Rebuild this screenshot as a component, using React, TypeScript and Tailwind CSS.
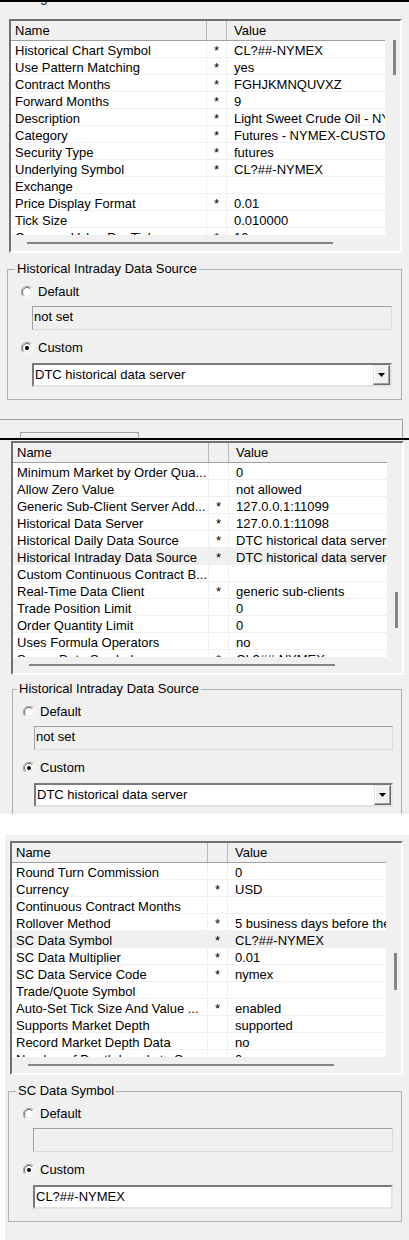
import React from "react"

type Row = { name: string; star?: boolean; value?: string }

const symbolRows: Row[] = [
  { name: "Historical Chart Symbol", star: true, value: "CL?##-NYMEX" },
  { name: "Use Pattern Matching", star: true, value: "yes" },
  { name: "Contract Months", star: true, value: "FGHJKMNQUVXZ" },
  { name: "Forward Months", star: true, value: "9" },
  { name: "Description", star: true, value: "Light Sweet Crude Oil - NYMEX" },
  { name: "Category", star: true, value: "Futures - NYMEX-CUSTOM" },
  { name: "Security Type", star: true, value: "futures" },
  { name: "Underlying Symbol", star: true, value: "CL?##-NYMEX" },
  { name: "Exchange" },
  { name: "Price Display Format", star: true, value: "0.01" },
  { name: "Tick Size", value: "0.010000" },
  { name: "Currency Value Per Tick", star: true, value: "10" },
]

const serverRows: Row[] = [
  { name: "Minimum Market by Order Qua...", value: "0" },
  { name: "Allow Zero Value", value: "not allowed" },
  { name: "Generic Sub-Client Server Add...", star: true, value: "127.0.0.1:11099" },
  { name: "Historical Data Server", star: true, value: "127.0.0.1:11098" },
  { name: "Historical Daily Data Source", star: true, value: "DTC historical data server" },
  { name: "Historical Intraday Data Source", star: true, value: "DTC historical data server" },
  { name: "Custom Continuous Contract B..." },
  { name: "Real-Time Data Client", star: true, value: "generic sub-clients" },
  { name: "Trade Position Limit", value: "0" },
  { name: "Order Quantity Limit", value: "0" },
  { name: "Uses Formula Operators", value: "no" },
  { name: "Server Data Symbol", star: true, value: "CL?##-NYMEX" },
]

const dataRows: Row[] = [
  { name: "Round Turn Commission", value: "0" },
  { name: "Currency", star: true, value: "USD" },
  { name: "Continuous Contract Months" },
  { name: "Rollover Method", star: true, value: "5 business days before the expiration" },
  { name: "SC Data Symbol", star: true, value: "CL?##-NYMEX" },
  { name: "SC Data Multiplier", star: true, value: "0.01" },
  { name: "SC Data Service Code", star: true, value: "nymex" },
  { name: "Trade/Quote Symbol" },
  { name: "Auto-Set Tick Size And Value ...", star: true, value: "enabled" },
  { name: "Supports Market Depth", value: "supported" },
  { name: "Record Market Depth Data", value: "no" },
  { name: "Number of Depth Levels to S...", value: "0" },
]

function Radio({ checked }: { checked?: boolean }) {
  return (
    <svg width="12" height="12" viewBox="0 0 12 12" className="shrink-0">
      <circle cx="6" cy="6" r="5.5" fill="#ffffff" />
      <path d="M1.9 10.1 A5.8 5.8 0 0 1 10.1 1.9" stroke="#a0a0a0" fill="none" />
      <path d="M2.8 9.2 A4.5 4.5 0 0 1 9.2 2.8" stroke="#696969" fill="none" />
      <path d="M10.1 1.9 A5.8 5.8 0 0 1 1.9 10.1" stroke="#ffffff" fill="none" />
      <path d="M9.2 2.8 A4.5 4.5 0 0 1 2.8 9.2" stroke="#e3e3e3" fill="none" />
      {checked && <circle cx="6" cy="6" r="2" fill="#000000" />}
    </svg>
  )
}

function PropertyGrid({
  rows,
  highlight,
  className,
  thumb,
}: {
  rows: Row[]
  highlight?: number
  className: string
  thumb: string
}) {
  return (
    <div
      className={`w-[393px] h-[234px] border-2 border-t-[#707070] border-l-[#707070] border-b-white border-r-white bg-[#f0f0f0] ${className}`}
    >
      <div className="flex h-[214px]">
        <div className="w-[374px] flex flex-col">
          {/* header */}
          <div className="flex h-[20px] border-b border-[#a0a0a0] leading-[19px]">
            <div className="w-[196px] border-r border-[#b9b9b9] pl-[4px]">Name</div>
            <div className="w-[20px] border-r border-[#b9b9b9]" />
            <div className="flex-1 pl-[7px]">Value</div>
          </div>
          <div className="h-[194px] overflow-hidden bg-white">
            {rows.map((r, i) => (
              <div
                key={r.name}
                className={`flex h-[17px] border-b border-[#f0f0f0] ${i === highlight ? "bg-[#f0f0f0]" : ""}`}
              >
                <div className="w-[196px] shrink-0 border-r border-[#f0f0f0] pl-[4px] pt-[2px] leading-[16px] whitespace-nowrap overflow-x-clip">
                  {r.name}
                </div>
                <div className="w-[20px] shrink-0 border-r border-[#f0f0f0] text-center pt-[2px] leading-[16px]">
                  {r.star ? "*" : ""}
                </div>
                <div className="flex-1 min-w-0 pl-[7px] pt-[2px] leading-[16px] whitespace-nowrap overflow-x-clip">
                  {r.value}
                </div>
              </div>
            ))}
          </div>
        </div>
        {/* vertical scrollbar */}
        <div className="flex-1">
          <div className={`ml-[8px] w-[3px] bg-[#858585] ${thumb}`} />
        </div>
      </div>
      {/* horizontal scrollbar */}
      <div className="h-[16px] pt-[7px]">
        <div className="ml-[16px] w-[306px] h-[2px] bg-[#858585]" />
      </div>
    </div>
  )
}

function GroupBox({
  title,
  className,
  labelClass,
  radioClass,
  fieldClass,
  defaultText,
  children,
}: {
  title: string
  className: string
  labelClass: string
  radioClass: string
  fieldClass: string
  defaultText: string
  children: React.ReactNode
}) {
  return (
    <div className={`relative h-[131px] border border-[#b0b0b0] ${className}`}>
      <span className={`absolute -top-[9px] bg-[#f0f0f0] px-[2px] leading-[15px] ${labelClass}`}>
        {title}
      </span>
      <div className={`mt-[14px] flex h-[16px] items-center ${radioClass}`}>
        <Radio />
        <span className="ml-[5px] leading-[16px]">Default</span>
      </div>
      <div
        className={`mt-[6px] h-[24px] border border-t-[#a0a0a0] border-l-[#a0a0a0] border-b-[#dcdcdc] border-r-[#dcdcdc] bg-[#f0f0f0] pl-[1px] pt-[2px] leading-[16px] ${fieldClass}`}
      >
        {defaultText}
      </div>
      <div className={`mt-[10px] flex h-[16px] items-center ${radioClass}`}>
        <Radio checked />
        <span className="ml-[5px] leading-[16px]">Custom</span>
      </div>
      <div
        className={`mt-[7px] h-[24px] flex border-2 border-t-[#7a7a7a] border-l-[#7a7a7a] border-b-[#e3e3e3] border-r-[#e3e3e3] bg-white ${fieldClass}`}
      >
        {children}
      </div>
    </div>
  )
}

function Dropdown({ text }: { text: string }) {
  return (
    <>
      <div className="flex-1 flex items-center pl-[1px] leading-[16px] whitespace-nowrap">{text}</div>
      <div className="w-[17px] flex items-center justify-center border border-t-[#e3e3e3] border-l-[#e3e3e3] border-b-[#696969] border-r-[#696969] bg-[#f0f0f0] shadow-[inset_-1px_-1px_0_#a0a0a0,inset_1px_1px_0_#ffffff]">
        <svg width="7" height="4" viewBox="0 0 7 4">
          <path d="M0 0 H7 L3.5 4 Z" fill="#000000" />
        </svg>
      </div>
    </>
  )
}

export default function App() {
  return (
    <div className="w-[409px] bg-white font-['Liberation_Sans',Arial,sans-serif] text-[13px] text-black">
      {/* first capture */}
      <div className="bg-[#f0f0f0] border-t-2 border-black">
        <div className="h-[17px] overflow-hidden pl-[7px]">
          <div className="-mt-[12px] leading-[15px]">Settings</div>
        </div>
        <PropertyGrid rows={symbolRows} className="ml-[9px]" thumb="mt-[19px] h-[35px]" />
        <GroupBox
          title="Historical Intraday Data Source"
          className="mt-[16px] ml-[7px] w-[395px]"
          labelClass="left-[7px]"
          radioClass="pl-[13px]"
          fieldClass="ml-[24px] w-[360px]"
          defaultText="not set"
        >
          <Dropdown text="DTC historical data server" />
        </GroupBox>
        <div className="mt-[19px] h-[19px] w-[403px] border-t border-r border-[#a0a0a0]">
          <div className="mt-[12px] ml-[20px] w-[119px] h-[6px] border-t border-l border-r border-[#a0a0a0]" />
        </div>
      </div>

      {/* second capture */}
      <div className="h-[376px] overflow-hidden bg-[#f0f0f0] border-t-2 border-black">
        <PropertyGrid
          rows={serverRows}
          highlight={5}
          className="mt-[1px] ml-[11px]"
          thumb="mt-[149px] h-[36px]"
        />
        <GroupBox
          title="Historical Intraday Data Source"
          className="mt-[14px] ml-[12px] w-[390px]"
          labelClass="left-[4px]"
          radioClass="pl-[10px]"
          fieldClass="ml-[21px] w-[359px]"
          defaultText="not set"
        >
          <Dropdown text="DTC historical data server" />
        </GroupBox>
      </div>

      {/* third capture */}
      <div className="mt-[21px] pl-[5px]">
        <div className="h-[405px] bg-[#f0f0f0] pt-[6px]">
          <PropertyGrid
            rows={dataRows}
            highlight={4}
            className="ml-[5px]"
            thumb="mt-[110px] h-[37px]"
          />
          <GroupBox
            title="SC Data Symbol"
            className="mt-[16px] ml-[3px] w-[394px]"
            labelClass="left-[7px]"
            radioClass="pl-[14px]"
            fieldClass="ml-[24px] w-[360px]"
            defaultText=""
          >
            <div className="flex-1 flex items-center pl-[1px] leading-[16px]">CL?##-NYMEX</div>
          </GroupBox>
        </div>
      </div>
    </div>
  )
}
